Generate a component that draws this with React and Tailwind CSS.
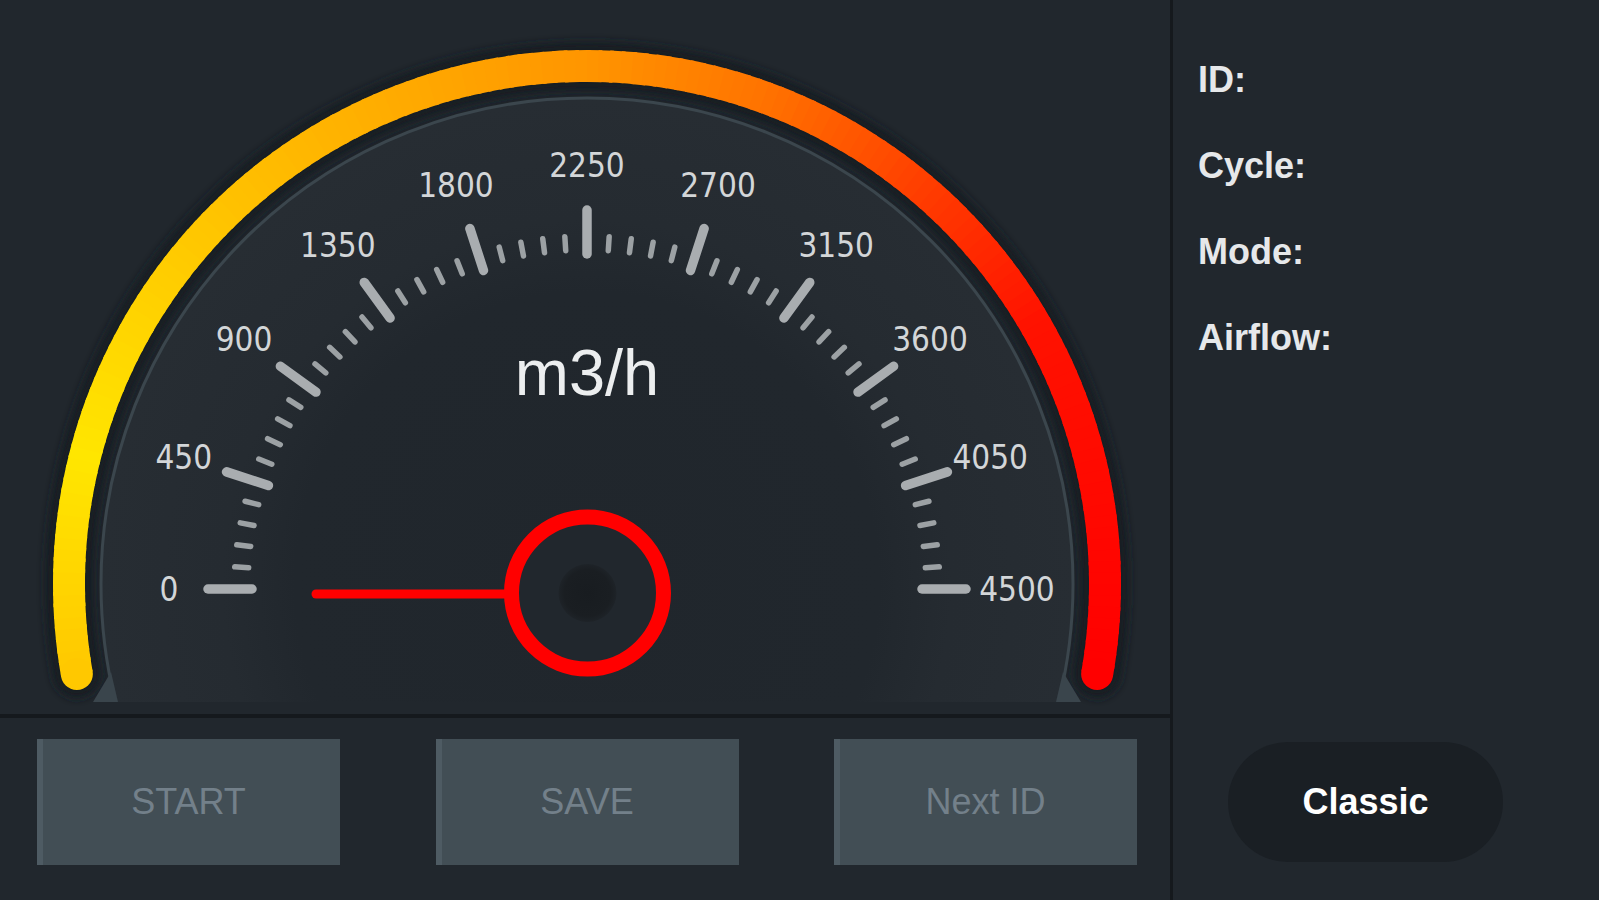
import React from "react";

const CX = 587;
const CY = 589;
const ACX = 587;
const ACY = 584;

function pt(cx, cy, r, deg) {
  const a = (deg * Math.PI) / 180;
  return [cx + r * Math.cos(a), cy - r * Math.sin(a)];
}

const STOPS = [
  [0, [255, 200, 0]],
  [0.12, [255, 230, 0]],
  [0.3, [255, 190, 0]],
  [0.5, [255, 149, 0]],
  [0.6, [255, 115, 0]],
  [0.7, [255, 62, 0]],
  [0.8, [255, 18, 0]],
  [1, [255, 0, 0]],
];

function colorAt(t) {
  for (let i = 0; i < STOPS.length - 1; i++) {
    const [t0, c0] = STOPS[i];
    const [t1, c1] = STOPS[i + 1];
    if (t >= t0 && t <= t1) {
      const f = (t - t0) / (t1 - t0);
      const c = c0.map((v, k) => Math.round(v + (c1[k] - v) * f));
      return `rgb(${c[0]},${c[1]},${c[2]})`;
    }
  }
  return "rgb(255,0,0)";
}

function Gauge() {
  const R = 518;
  const start = 190;
  const end = -10;
  const N = 160;
  const segs = [];
  for (let i = 0; i < N; i++) {
    const a0 = start - ((start - end) * i) / N;
    const a1 = start - ((start - end) * (i + 1)) / N - 0.4;
    const [x0, y0] = pt(ACX, ACY, R, a0);
    const [x1, y1] = pt(ACX, ACY, R, Math.max(a1, end));
    segs.push(
      <path
        key={i}
        d={`M ${x0} ${y0} A ${R} ${R} 0 0 1 ${x1} ${y1}`}
        stroke={colorAt((i + 0.5) / N)}
        strokeWidth="32"
        fill="none"
      />
    );
  }
  const [sx, sy] = pt(ACX, ACY, R, start);
  const [ex, ey] = pt(ACX, ACY, R, end);

  const ticks = [];
  for (let i = 0; i <= 50; i++) {
    const a = 180 - i * 3.6;
    const major = i % 5 === 0;
    const r1 = major ? 335 : 339;
    const r2 = major ? 379 : 353;
    const [x1, y1] = pt(CX, CY, r1, a);
    const [x2, y2] = pt(CX, CY, r2, a);
    ticks.push(
      <line
        key={i}
        x1={x1}
        y1={y1}
        x2={x2}
        y2={y2}
        stroke={major ? "#a9adb0" : "#9ca1a4"}
        strokeWidth={major ? 9.5 : 5.5}
        strokeLinecap="round"
      />
    );
  }

  const labels = [];
  for (let i = 0; i <= 10; i++) {
    const a = 180 - i * 18;
    const r = i === 0 ? 418 : i === 10 ? 430 : 424;
    const [x, y] = pt(CX, CY, r, a);
    labels.push(
      <text
        key={i}
        x={x}
        y={y}
        textAnchor="middle"
        dominantBaseline="central"
        fill="#d3d6d8"
        fontSize="33"
        className="font-['DejaVu_Sans_Condensed','DejaVu_Sans',sans-serif]"
      >
        {i * 450}
      </text>
    );
  }

  const [ax, ay] = pt(ACX, ACY, R, start);
  const [bx, by] = pt(ACX, ACY, R, end);

  return (
    <svg width="1170" height="714" viewBox="0 0 1170 714" className="block">
      <defs>
        <radialGradient id="face" cx={ACX} cy={ACY} r="486" gradientUnits="userSpaceOnUse">
          <stop offset="0" stopColor="#20262c" />
          <stop offset="0.6" stopColor="#21272d" />
          <stop offset="0.75" stopColor="#252b31" />
          <stop offset="1" stopColor="#272d33" />
        </radialGradient>
        <clipPath id="cut">
          <rect x="0" y="0" width="1170" height="702" />
        </clipPath>
        <filter id="blur" x="-10%" y="-10%" width="120%" height="120%">
          <feGaussianBlur stdDeviation="4" />
        </filter>
        <radialGradient id="dot" cx="0.5" cy="0.5" r="0.5">
          <stop offset="0" stopColor="#181c20" />
          <stop offset="0.8" stopColor="#1a1e22" />
          <stop offset="1" stopColor="#1e2328" />
        </radialGradient>
      </defs>

      <path
        d={`M ${ax} ${ay} A ${R} ${R} 0 1 1 ${bx} ${by}`}
        stroke="#191e22"
        strokeWidth="48"
        fill="none"
        strokeLinecap="round"
        filter="url(#blur)"
      />

      <g clipPath="url(#cut)">
        <circle cx={ACX} cy={ACY} r="486" fill="url(#face)" stroke="#3b464d" strokeWidth="3" />
      </g>
      <polygon points="93,702 118,702 111,672" fill="#3a454c" />
      <polygon points="1081,702 1056,702 1063,672" fill="#3a454c" />

      {segs}
      <circle cx={sx} cy={sy} r="16" fill={colorAt(0)} />
      <circle cx={ex} cy={ey} r="16" fill={colorAt(1)} />

      {ticks}
      {labels}

      <text
        x={CX}
        y="372"
        textAnchor="middle"
        dominantBaseline="central"
        fill="#eceeef"
        fontSize="65"
        className="font-['Liberation_Sans',Arial,sans-serif]"
      >
        m3/h
      </text>

      <line x1="316" y1="594" x2="512" y2="594" stroke="#ff0000" strokeWidth="9" strokeLinecap="round" />
      <circle cx="587.5" cy="593" r="76" fill="#21272d" stroke="#ff0000" strokeWidth="15" />
      <circle cx="587.5" cy="593" r="29" fill="url(#dot)" />
    </svg>
  );
}

function Btn({ children }) {
  return (
    <div className="flex h-[126px] w-[303px] items-center justify-center border-l-[6px] border-[#4e5b63] bg-[#424e55] pr-[6px] text-[36px] text-[#73808a] font-['Liberation_Sans',Arial,sans-serif]">
      {children}
    </div>
  );
}

export default function App() {
  return (
    <div className="flex h-[900px] w-[1599px] overflow-hidden bg-[#21272d]">
      <div className="flex w-[1170px] flex-col">
        <div className="h-[718px] border-b-4 border-[#15191d]">
          <Gauge />
        </div>
        <div className="flex flex-1 items-start justify-between pl-[37px] pr-[33px] pt-[21px]">
          <Btn>START</Btn>
          <Btn>SAVE</Btn>
          <Btn>Next ID</Btn>
        </div>
      </div>
      <div className="w-[3px] bg-[#15191d]" />
      <div className="flex flex-1 flex-col pl-[25px] pt-[60px] font-['Liberation_Sans',Arial,sans-serif]">
        <div className="flex flex-col gap-[46px] text-[36px] font-bold leading-[40px] text-[#e6e8ea]">
          <div>ID:</div>
          <div>Cycle:</div>
          <div>Mode:</div>
          <div>Airflow:</div>
        </div>
        <div className="mb-[38px] ml-[30px] mt-auto flex h-[120px] w-[275px] items-center justify-center rounded-full bg-[#1a1f24] text-[36px] font-bold text-white">
          Classic
        </div>
      </div>
    </div>
  );
}
